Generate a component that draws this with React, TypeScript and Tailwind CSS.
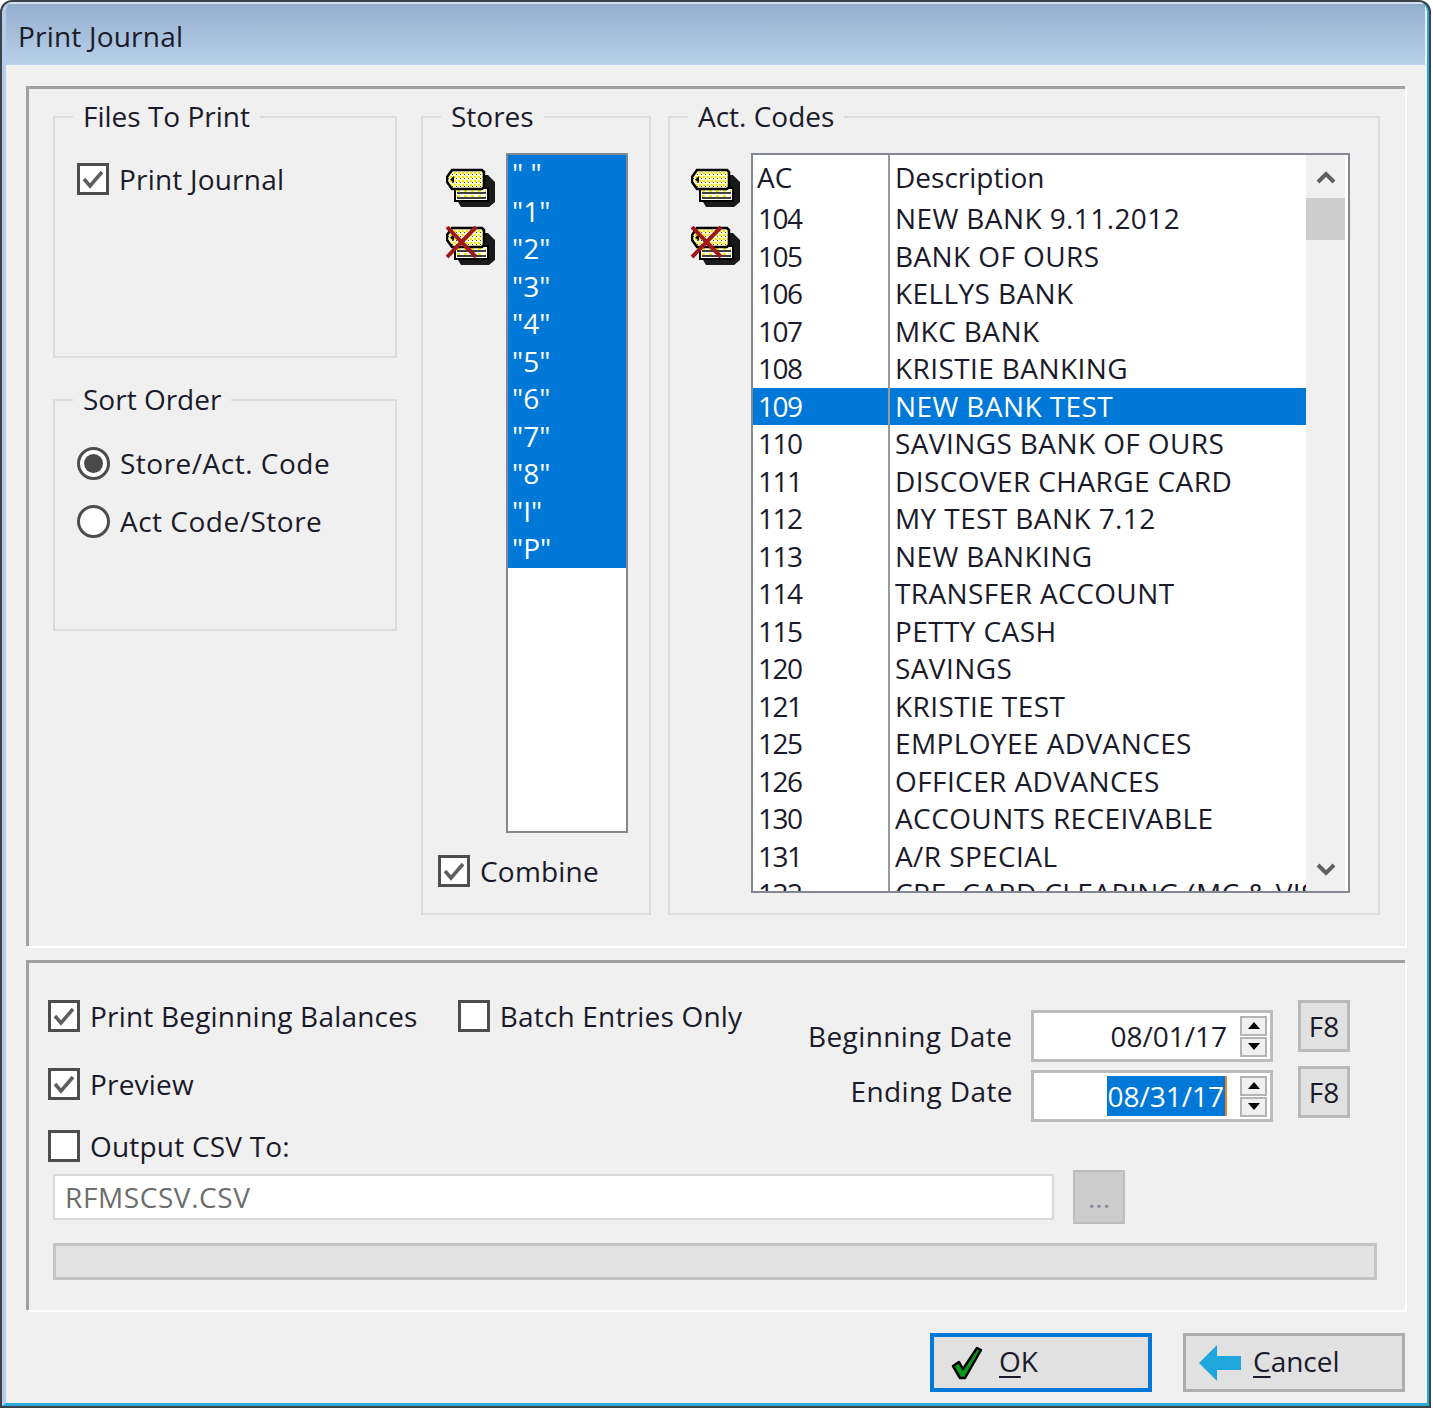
import React from 'react';

const stores = ['" "', '"1"', '"2"', '"3"', '"4"', '"5"', '"6"', '"7"', '"8"', '"I"', '"P"'];

const accounts = [
  ['104', 'NEW BANK 9.11.2012'],
  ['105', 'BANK OF OURS'],
  ['106', 'KELLYS BANK'],
  ['107', 'MKC BANK'],
  ['108', 'KRISTIE BANKING'],
  ['109', 'NEW BANK TEST'],
  ['110', 'SAVINGS BANK OF OURS'],
  ['111', 'DISCOVER CHARGE CARD'],
  ['112', 'MY TEST BANK 7.12'],
  ['113', 'NEW BANKING'],
  ['114', 'TRANSFER ACCOUNT'],
  ['115', 'PETTY CASH'],
  ['120', 'SAVINGS'],
  ['121', 'KRISTIE TEST'],
  ['125', 'EMPLOYEE ADVANCES'],
  ['126', 'OFFICER ADVANCES'],
  ['130', 'ACCOUNTS RECEIVABLE'],
  ['131', 'A/R SPECIAL'],
  ['132', 'CRE. CARD CLEARING (MC & VISA)'],
];

const Check: React.FC<{ checked?: boolean; label: string }> = ({ checked, label }) => (
  <div className="flex items-center gap-[10px] h-[32px]">
    <div className="w-[32px] h-[32px] border-[3px] border-[#4d4d4d] bg-white flex items-center justify-center shrink-0">
      {checked && (
        <svg viewBox="0 0 26 26" className="w-[26px] h-[26px]">
          <path d="M4 13 L10 20 L22 6" fill="none" stroke="#5f5f5f" strokeWidth="3.5" />
        </svg>
      )}
    </div>
    <span className="leading-[32px] whitespace-nowrap tracking-[0.2px]">{label}</span>
  </div>
);

const Radio: React.FC<{ checked?: boolean; label: string }> = ({ checked, label }) => (
  <div className="flex items-center gap-[10px] h-[33px]">
    <div className="w-[33px] h-[33px] rounded-full border-[3px] border-[#4d4d4d] bg-white flex items-center justify-center shrink-0">
      {checked && <div className="w-[19px] h-[19px] rounded-full bg-[#4a4a4a]" />}
    </div>
    <span className="leading-[33px] whitespace-nowrap tracking-[0.5px]">{label}</span>
  </div>
);

const Group: React.FC<{ title: string; className: string; children?: React.ReactNode }> = ({ title, className, children }) => (
  <div className={`relative border-2 border-[#dcdcdc] ${className}`}>
    <div className="absolute -top-[21px] left-[18px] px-[10px] bg-[#f0f0f0] leading-[38px]">{title}</div>
    {children}
  </div>
);

const TagIcon: React.FC<{ crossed?: boolean }> = ({ crossed }) => (
  <svg viewBox="0 0 50 40" className="w-[50px] h-[40px]">
    <defs>
      <pattern id="tagDither" width="4" height="4" patternUnits="userSpaceOnUse">
        <rect width="4" height="4" fill="#fffbd0" />
        <rect width="2" height="2" fill="#f5e800" />
        <rect x="2" y="2" width="1" height="1" fill="#4a4a2a" />
      </pattern>
    </defs>
    <path d="M12 34 L15 39 H43 L49 34 V14 L42 7 H36 V34 Z" fill="#1a1a1a" />
    <rect x="9" y="20" width="33" height="13" fill="#fff" stroke="#000" strokeWidth="2" />
    <path d="M11 25 H40 M11 30 H40" stroke="#000" strokeWidth="1.5" />
    <path d="M11 23 H40 M11 28 H40" stroke="#f5e800" strokeWidth="2" strokeDasharray="3 4" />
    <path d="M6 2 H36 L38 4 V19 L36 21 H6 L1 14 V9 Z" fill="url(#tagDither)" stroke="#000" strokeWidth="2.5" />
    <path d="M4 11.5 L8 8 V15 Z" fill="#000" />
    {crossed && <path d="M1 1 L30 31 M30 1 L1 31" stroke="#a01818" strokeWidth="4" />}
  </svg>
);

const Spinner: React.FC = () => (
  <div className="w-[27px] h-[41px] flex flex-col gap-[1px]">
    <div className="flex-1 border-2 border-[#b4b4b4] bg-[#f0f0f0] flex items-center justify-center">
      <div className="w-0 h-0 border-x-[6px] border-x-transparent border-b-[7px] border-b-black" />
    </div>
    <div className="flex-1 border-2 border-[#b4b4b4] bg-[#f0f0f0] flex items-center justify-center">
      <div className="w-0 h-0 border-x-[6px] border-x-transparent border-t-[7px] border-t-black" />
    </div>
  </div>
);

const DateBox: React.FC<{ value: string; selected?: boolean }> = ({ value, selected }) => (
  <div className="w-[242px] h-[52px] border-[3px] border-[#bcbcbc] bg-white flex items-center justify-end pr-[3px]">
    <span className={selected ? 'bg-[#0078d7] text-white border-r-2 border-r-[#f58220] leading-[40px] pr-[1px]' : 'leading-[40px]'}>{value}</span>
    <div className="ml-[13px]">
      <Spinner />
    </div>
  </div>
);

const F8: React.FC = () => (
  <div className="w-[52px] h-[52px] border-[3px] border-[#b9b9b9] bg-[#e1e1e1] flex items-center justify-center">F8</div>
);

export default function App() {
  return (
    <div className="w-[1433px] h-[1408px] bg-white pr-[2px] overflow-hidden">
      <div className="h-full bg-[#3b4248] pt-[2px] pr-[2px] pb-[2px] pl-[2px] rounded-t-[12px] text-[28px] text-[#1a1a2a] overflow-hidden" style={{ fontFamily: '"Open Sans", sans-serif' }}>
        <div className="h-full bg-[#f0f0f0] border-l-[4px] border-r-[2px] border-b-[3px] border-l-[#b5cdea] border-r-[#29a9dc] border-b-[#29a9dc] rounded-t-[10px] flex flex-col overflow-hidden">
          <div className="h-[63px] mr-[2px] shrink-0 pl-[12px] pt-[2px] tracking-[0.2px] flex items-center bg-gradient-to-b from-[#93aecd] to-[#bad1ea] border-t-[2px] border-t-[#d5e0ec]">
            Print Journal
          </div>

          {/* upper panel */}
          <div className="mt-[21px] ml-[20px] mr-[22px] h-[860px] shrink-0 border-t-[3px] border-l-[3px] border-[#a0a0a0] shadow-[2px_2px_0_#ffffff] flex pl-[24px] pt-[27px] gap-[24px]">
            <div className="w-[344px] flex flex-col gap-[41px]">
              <Group title="Files To Print" className="h-[242px] pl-[22px] pt-[45px]">
                <Check checked label="Print Journal" />
              </Group>
              <Group title="Sort Order" className="h-[232px] pl-[22px] pt-[46px]">
                <div className="flex flex-col gap-[25px]">
                  <Radio checked label="Store/Act. Code" />
                  <Radio label="Act Code/Store" />
                </div>
              </Group>
            </div>

            <Group title="Stores" className="w-[230px] h-[799px]">
              <div className="flex pt-[35px] pl-[23px]">
                <div className="w-[60px] pt-[15px] flex flex-col gap-[18px]">
                  <TagIcon />
                  <TagIcon crossed />
                </div>
                <div className="w-[122px] h-[680px] border-2 border-[#828790] bg-white">
                  <div className="bg-[#0078d7] text-white">
                    {stores.map((s) => (
                      <div key={s} className="h-[37.5px] leading-[37.5px] pl-[4px] whitespace-pre">{s}</div>
                    ))}
                  </div>
                </div>
              </div>
              <div className="mt-[22px] ml-[15px]">
                <Check checked label="Combine" />
              </div>
            </Group>

            <div className="-ml-[7px]">
              <Group title="Act. Codes" className="w-[712px] h-[799px] pt-[35px] pl-[21px]">
                <div className="flex">
                  <div className="w-[60px] pt-[15px] flex flex-col gap-[18px]">
                    <TagIcon />
                    <TagIcon crossed />
                  </div>
                  <div className="w-[599px] h-[740px] border-2 border-[#828790] bg-white flex overflow-hidden">
                    <div className="w-[553px] shrink-0 overflow-hidden">
                      <div className="flex h-[45px] leading-[45px]">
                        <div className="w-[137px] shrink-0 pl-[4px] border-r-2 border-r-[#9a9a9a]">AC</div>
                        <div className="pl-[5px]">Description</div>
                      </div>
                      {accounts.map(([code, desc]) => (
                        <div key={code} className={`flex h-[37.5px] leading-[37.5px] whitespace-nowrap ${code === '109' ? 'bg-[#0078d7] text-white' : ''}`}>
                          <div className="w-[137px] shrink-0 pl-[5px] tracking-[-1.5px] border-r-2 border-r-[#9a9a9a]">{code}</div>
                          <div className="pl-[5px] tracking-[0.4px]">{desc}</div>
                        </div>
                      ))}
                    </div>
                    <div className="w-[39px] shrink-0 bg-[#f0f0f0] flex flex-col items-center justify-between mr-[2px]">
                      <div className="w-full">
                        <div className="h-[43px] flex items-center justify-center">
                          <svg viewBox="0 0 20 14" className="w-[20px] h-[14px]">
                            <path d="M2 12 L10 4 L18 12" fill="none" stroke="#606060" strokeWidth="4" />
                          </svg>
                        </div>
                        <div className="h-[42px] bg-[#cdcdcd]" />
                      </div>
                      <div className="h-[43px] flex items-center justify-center">
                        <svg viewBox="0 0 20 14" className="w-[20px] h-[14px]">
                          <path d="M2 2 L10 10 L18 2" fill="none" stroke="#606060" strokeWidth="4" />
                        </svg>
                      </div>
                    </div>
                  </div>
                </div>
              </Group>
            </div>
          </div>

          {/* lower panel */}
          <div className="mt-[14px] ml-[20px] mr-[22px] h-[350px] shrink-0 border-t-[3px] border-l-[3px] border-[#a0a0a0] shadow-[2px_2px_0_#ffffff] pl-[19px] pt-[37px]">
            <div className="flex h-[172px]">
              <div className="w-[760px] flex flex-col">
                <div className="flex gap-[40px] h-[32px]">
                  <Check checked label="Print Beginning Balances" />
                  <Check label="Batch Entries Only" />
                </div>
                <div className="mt-[36px] h-[32px]">
                  <Check checked label="Preview" />
                </div>
                <div className="mt-[30px] h-[32px]">
                  <Check label="Output CSV To:" />
                </div>
              </div>
              <div className="pt-[10px] w-[203px] text-right leading-[52px] whitespace-nowrap tracking-[0.4px] flex flex-col gap-[3px]">
                <div className="h-[52px]">Beginning Date</div>
                <div className="h-[52px] -mr-[2px]">Ending Date</div>
              </div>
              <div className="ml-[20px] pt-[10px] flex flex-col gap-[8px]">
                <DateBox value="08/01/17" />
                <DateBox value="08/31/17" selected />
              </div>
              <div className="ml-[25px] flex flex-col gap-[14px]">
                <F8 />
                <F8 />
              </div>
            </div>
            <div className="ml-[5px] flex items-center gap-[19px] -mt-[2px]">
              <div className="w-[1001px] h-[46px] border-2 border-[#d9d9d9] bg-white pl-[10px] leading-[42px] tracking-[0.6px] text-[#6d6d6d]">RFMSCSV.CSV</div>
              <div className="w-[52px] h-[54px] border-2 border-[#bdbdbd] bg-[#cccccc] text-[#8a8a9a] flex items-center justify-center">...</div>
            </div>
            <div className="ml-[5px] mt-[19px] w-[1324px] h-[37px] border-[3px] border-[#c4c4c4] bg-[#e3e3e3]" />
          </div>

          {/* buttons */}
          <div className="flex justify-end gap-[31px] mr-[22px] mt-[23px]">
            <div className="w-[222px] h-[59px] border-[4px] border-[#0078d7] bg-[#e1e1e1] flex items-center pl-[17px] gap-[16px]">
              <svg viewBox="0 0 32 34" className="w-[32px] h-[34px]">
                <path d="M2 20 L8 16 L12 23 L26 2 L30 4 L14 32 L9 32 Z" fill="#0a9a1a" stroke="#000" strokeWidth="2.5" strokeLinejoin="round" />
              </svg>
              <span className="mb-[4px]"><span className="underline decoration-2 underline-offset-4">O</span>K</span>
            </div>
            <div className="w-[222px] h-[59px] border-[3px] border-[#adadad] bg-[#e1e1e1] flex items-center pl-[13px] gap-[12px]">
              <svg viewBox="0 0 42 36" className="w-[42px] h-[36px]">
                <path d="M0 18 L18 0 V11 H42 V25 H18 V36 Z" fill="#1fa6dc" />
              </svg>
              <span className="mb-[4px]"><span className="underline decoration-2 underline-offset-4">C</span>ancel</span>
            </div>
          </div>
        </div>
      </div>
    </div>
  );
}
